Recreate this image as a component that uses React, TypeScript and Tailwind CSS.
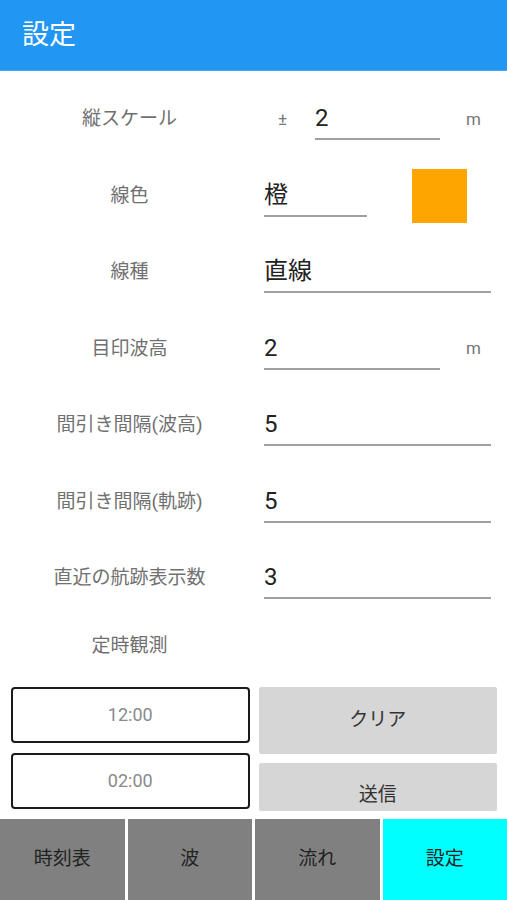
import React from "react";

const font = { fontFamily: '"Roboto", "Noto Sans CJK JP", sans-serif' };

const Row = ({ label, children, h = "h-[76.5px]" }: any) => (
  <div className={`flex items-center ${h}`}>
    <div className="w-[259px] text-center text-[19px] text-[#707070]">{label}</div>
    <div className="flex-1 flex items-center pl-[5px] pr-[16px]">{children}</div>
  </div>
);

const Field = ({ value, className = "" }: any) => (
  <div className={`h-[42px] flex items-center border-b-2 border-[#a0a0a0] text-[24px] text-[#222] ${className}`}>
    {value}
  </div>
);

const App = () => {
  return (
    <div className="w-[507px] h-[900px] bg-white flex flex-col overflow-hidden" style={font}>
      <div className="h-[71px] bg-[#2196f3] flex items-center pl-[22px] text-white text-[27px] border-b border-[#42a5f5]">
        設定
      </div>

      <div className="pt-[10px] flex flex-col">
        <Row label="縦スケール">
          <span className="w-[51px] pl-[14px] text-[17px] text-[#757575]">±</span>
          <Field value="2" className="w-[125px]" />
          <span className="ml-auto mr-[10px] text-[17px] text-[#757575]">m</span>
        </Row>
        <Row label="線色">
          <Field value="橙" className="w-[103px]" />
          <div className="ml-[45px] w-[55px] h-[54px] bg-[#ffa500]" />
        </Row>
        <Row label="線種">
          <Field value="直線" className="w-full" />
        </Row>
        <Row label="目印波高">
          <Field value="2" className="w-[176px]" />
          <span className="ml-auto mr-[10px] text-[17px] text-[#757575]">m</span>
        </Row>
        <Row label="間引き間隔(波高)">
          <Field value="5" className="w-full" />
        </Row>
        <Row label="間引き間隔(軌跡)">
          <Field value="5" className="w-full" />
        </Row>
        <Row label="直近の航跡表示数">
          <Field value="3" className="w-full" />
        </Row>
        <Row label="定時観測" h="h-[60px]" />
      </div>

      <div className="mt-[10px] px-[10px] pl-[11px] grid grid-cols-2 gap-x-[9px] h-[124px] overflow-hidden">
        <div className="flex flex-col gap-[10px]">
          <div className="h-[56px] border-2 border-[#1a1a1a] rounded-[4px] flex items-center justify-center text-[18px] text-[#8a8a8a]">
            12:00
          </div>
          <div className="h-[56px] border-2 border-[#1a1a1a] rounded-[4px] flex items-center justify-center text-[18px] text-[#8a8a8a]">
            02:00
          </div>
        </div>
        <div className="flex flex-col gap-[9px]">
          <div className="h-[67px] bg-[#d6d6d6] rounded-[2px] flex items-center justify-center text-[19px] text-[#333]">
            クリア
          </div>
          <div className="h-[48px] bg-[#d6d6d6] rounded-[2px] flex items-end justify-center pb-[1px] text-[19px] text-[#333]">
            送信
          </div>
        </div>
      </div>

      <div className="mt-auto h-[81px] flex gap-[3px] text-[19px] text-[#222]">
        <div className="flex-1 bg-[#808080] flex items-center justify-center">時刻表</div>
        <div className="flex-1 bg-[#808080] flex items-center justify-center">波</div>
        <div className="flex-1 bg-[#808080] flex items-center justify-center">流れ</div>
        <div className="flex-1 bg-[#00ffff] flex items-center justify-center">設定</div>
      </div>
    </div>
  );
};

export default App;
